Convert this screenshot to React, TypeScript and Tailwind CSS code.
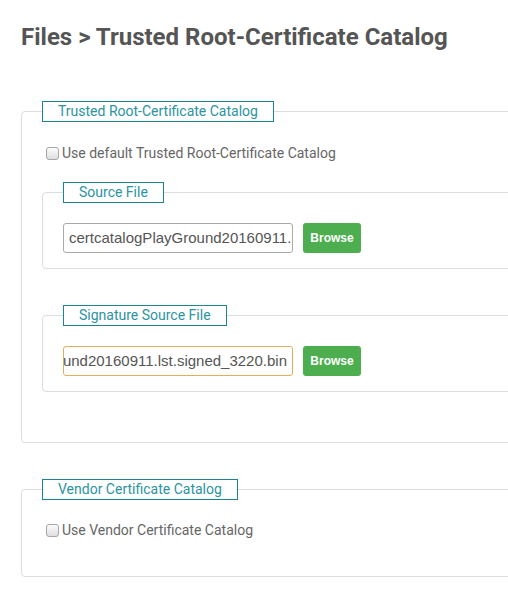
import React from 'react';

function Checkbox({ label }: { label: string }) {
  return (
    <div className="flex items-center h-[20px] pl-[4px] gap-[3px]">
      <span className="w-[13px] h-[13px] rounded-[3px] border border-[#a6a6a6] bg-gradient-to-b from-[#fcfcfc] to-[#dedede]" />
      <span className="text-[14px] text-[#666666]">{label}</span>
    </div>
  );
}

function Legend({ children }: { children: React.ReactNode }) {
  return (
    <legend className="border border-[#1b8692] px-[15px] h-[21px] leading-[19px] text-[14px] text-[#2b94a1]">
      {children}
    </legend>
  );
}

function FileField({
  title,
  value,
  focused,
  className,
}: {
  title: string;
  value: string;
  focused?: boolean;
  className?: string;
}) {
  return (
    <fieldset className={`border border-[#dddddd] rounded-[4px] px-5 pt-0 pb-[15px] min-w-0 ${className ?? ''}`}>
      <Legend>{title}</Legend>
      <div className="mt-[20px] flex items-center gap-[10px]">
        <div
          className={`w-[230px] h-[30px] rounded-[3px] border flex items-center overflow-hidden whitespace-nowrap px-[5px] text-[15px] text-[#555555] bg-white ${
            focused ? 'border-[#e3ae57] justify-end' : 'border-[#aaaaaa] justify-start'
          }`}
          style={{ fontFamily: '"Liberation Sans", Arial, sans-serif' }}
        >
          <span className="shrink-0">{value}</span>
        </div>
        <button
          className="w-[58px] h-[30px] rounded-[3px] bg-[#4cae4f] text-white text-[12px] font-bold"
          style={{ fontFamily: '"Liberation Sans", Arial, sans-serif' }}
        >
          Browse
        </button>
      </div>
    </fieldset>
  );
}

export default function App() {
  return (
    <div className="w-[508px] h-[595px] overflow-hidden bg-white" style={{ fontFamily: 'Roboto, "Noto Sans", sans-serif' }}>
      <div className="pl-[21px] pt-[20px]">
        <h1 className="text-[24px] leading-[34px] font-bold text-[#555555]">Files &gt; Trusted Root-Certificate Catalog</h1>

        <fieldset className="mt-[47px] w-[560px] border border-[#dddddd] rounded-[4px] px-5 pt-0 pb-[50px]">
          <Legend>Trusted Root-Certificate Catalog</Legend>
          <div className="mt-[21px]">
            <Checkbox label="Use default Trusted Root-Certificate Catalog" />
          </div>
          <FileField className="mt-[19px]" title="Source File" value="certcatalogPlayGround20160911.lst" />
          <FileField className="mt-[36px]" title="Signature Source File" value="certcatalogPlayGround20160911.lst.signed_3220.bin" focused />
        </fieldset>

        <fieldset className="mt-[36px] w-[560px] border border-[#dddddd] rounded-[4px] px-5 pt-0 pb-[36px]">
          <Legend>Vendor Certificate Catalog</Legend>
          <div className="mt-[20px]">
            <Checkbox label="Use Vendor Certificate Catalog" />
          </div>
        </fieldset>
      </div>
    </div>
  );
}
